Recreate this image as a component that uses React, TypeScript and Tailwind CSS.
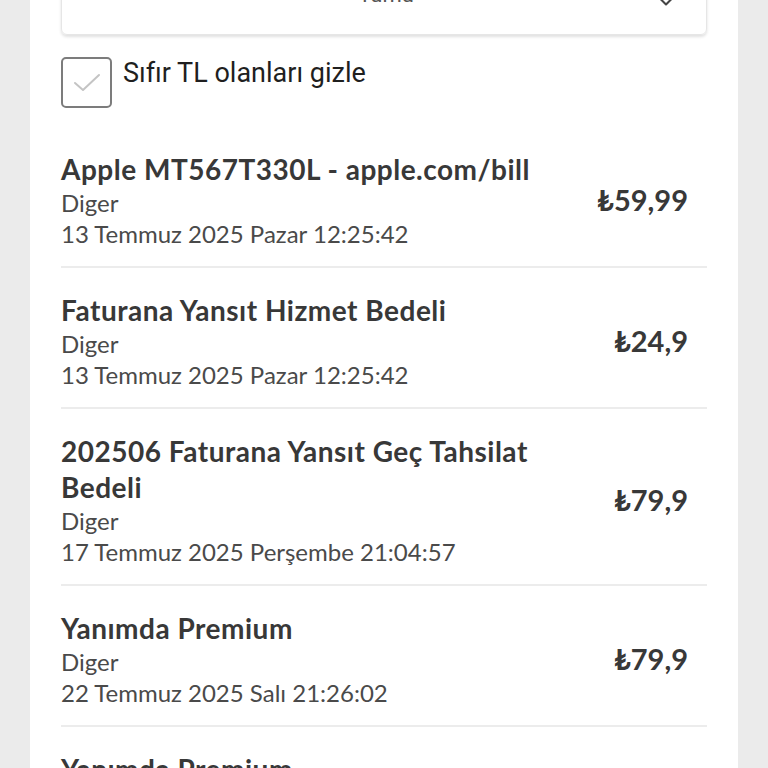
import { ChevronDown } from 'lucide-react';

type Harcama = { baslik: string; tur: string; tarih: string; tutar: string };

const harcamalar: Harcama[] = [
  { baslik: 'Apple MT567T330L - apple.com/bill', tur: 'Diger', tarih: '13 Temmuz 2025 Pazar 12:25:42', tutar: '₺59,99' },
  { baslik: 'Faturana Yansıt Hizmet Bedeli', tur: 'Diger', tarih: '13 Temmuz 2025 Pazar 12:25:42', tutar: '₺24,9' },
  { baslik: '202506 Faturana Yansıt Geç Tahsilat Bedeli', tur: 'Diger', tarih: '17 Temmuz 2025 Perşembe 21:04:57', tutar: '₺79,9' },
  { baslik: 'Yanımda Premium', tur: 'Diger', tarih: '22 Temmuz 2025 Salı 21:26:02', tutar: '₺79,9' },
  { baslik: 'Yanımda Premium', tur: 'Diger', tarih: '22 Temmuz 2025 Salı 21:26:02', tutar: '₺79,9' },
];

// tek bir harcama satırı
const HarcamaSatiri = ({ h }: { h: Harcama }) => (
  <div className="flex items-center border-b-2 border-[#ececec] pt-[24px] pb-[17px]">
    <div className="w-[500px] text-[#383838]">
      <div className="text-[28px] leading-[36px] font-bold tracking-[0.5px]">{h.baslik}</div>
      <div className="text-[24px] leading-[31px] text-[#4a4a4a]">{h.tur}</div>
      <div className="text-[24px] leading-[31px] text-[#4a4a4a]">{h.tarih}</div>
    </div>
    <div className="flex-1 text-right pr-[19px] text-[29px] font-bold text-[#383838]">{h.tutar}</div>
  </div>
);

export default function App() {
  return (
    <div className="h-[768px] overflow-hidden bg-[#ebebeb] flex justify-center" style={{ fontFamily: 'Lato, "Noto Sans", sans-serif' }}>
      <div className="w-[708px] bg-white px-[31px] -mt-[36px]">
        <div className="h-[71px] rounded-[6px] border border-[#e6e6e6] shadow-[0_2px_3px_rgba(0,0,0,0.12)] flex items-start pt-[17px] px-[30px]">
          <div className="flex-1 text-center text-[22px] leading-[26px] text-[#555] pl-[24px]" style={{ fontFamily: 'Roboto, sans-serif' }}>
            Tümü
          </div>
          <ChevronDown size={20} strokeWidth={2.5} className="text-[#444] mt-[10px]" />
        </div>

        <div className="flex items-start gap-[11px] mt-[22px]">
          <div className="w-[51px] h-[51px] rounded-[5px] border-2 border-[#7c7c7c] flex items-center justify-center">
            <svg width="30" height="22" viewBox="0 0 30 22" fill="none">
              <path d="M3 11 L11 18 L27 3" stroke="#c4c4c4" strokeWidth="2" strokeLinecap="round" strokeLinejoin="round" />
            </svg>
          </div>
          <span className="text-[27px] leading-[32px] text-[#1f1f1f]" style={{ fontFamily: 'Roboto, sans-serif' }}>
            Sıfır TL olanları gizle
          </span>
        </div>

        <div className="mt-[19px]">
          {harcamalar.map((h, i) => (
            <HarcamaSatiri key={i} h={h} />
          ))}
        </div>
      </div>
    </div>
  );
}
